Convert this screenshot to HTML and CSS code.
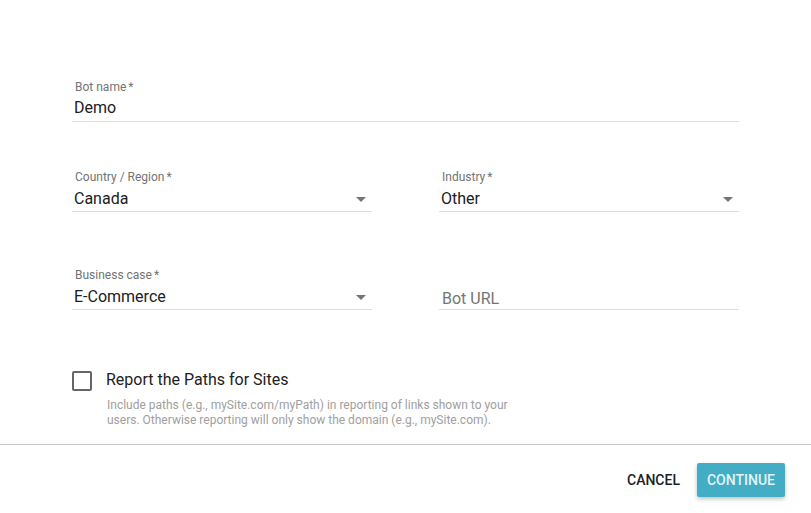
FILE: index.html
```html
<!DOCTYPE html>
<html>
<head>
<meta charset="utf-8">
<link rel="stylesheet" href="styles.css">
</head>
<body>
<div class="dialog">
  <div class="content">
    <div class="row row-1">
      <div class="field full">
        <div class="label">Bot name<span class="req">*</span></div>
        <div class="value input">Demo</div>
      </div>
    </div>
    <div class="row row-2">
      <div class="field">
        <div class="label">Country / Region<span class="req">*</span></div>
        <div class="value select"><span>Canada</span><span class="caret"></span></div>
      </div>
      <div class="field">
        <div class="label">Industry<span class="req">*</span></div>
        <div class="value select"><span>Other</span><span class="caret"></span></div>
      </div>
    </div>
    <div class="row row-3">
      <div class="field">
        <div class="label">Business case<span class="req">*</span></div>
        <div class="value select"><span>E-Commerce</span><span class="caret"></span></div>
      </div>
      <div class="field">
        <div class="label"></div>
        <div class="value placeholder"><span>Bot URL</span></div>
      </div>
    </div>
    <div class="check-row">
      <span class="checkbox"></span>
      <div class="check-text">
        <div class="check-title">Report the Paths for Sites</div>
        <div class="check-help">Include paths (e.g., mySite.com/myPath) in reporting of links shown to your<br>users. Otherwise reporting will only show the domain (e.g., mySite.com).</div>
      </div>
    </div>
  </div>
  <div class="footer">
    <button class="btn btn-flat">CANCEL</button>
    <button class="btn btn-primary">CONTINUE</button>
  </div>
</div>
</body>
</html>
```

FILE: styles.css
```css
html, body {
  margin: 0;
  padding: 0;
  background: #ffffff;
}
body {
  font-family: Roboto, "Liberation Sans", Arial, sans-serif;
  color: #212121;
  width: 811px;
  height: 513px;
  overflow: hidden;
}
.dialog {
  display: flex;
  flex-direction: column;
}
.content {
  padding: 79px 72px 16px 72px;
  display: flex;
  flex-direction: column;
}
.row {
  display: flex;
  gap: 67px;
  align-items: flex-end;
}
.row-2 { margin-top: 47px; }
.row-3 { margin-top: 54px; }
.field {
  width: 300px;
  display: flex;
  flex-direction: column;
  border-bottom: 1px solid #dedede;
}
.field.full { width: 667px; }
.label {
  font-size: 12px;
  line-height: 16px;
  height: 16px;
  color: #737373;
  padding-left: 3px;
}
.req {
  margin-left: 2px;
}
.value {
  font-size: 16px;
  line-height: 24px;
  color: #212121;
}
.value.input {
  padding: 1px 0 1px 2px;
}
.value.select {
  margin-top: 2px;
  display: flex;
  justify-content: space-between;
  align-items: center;
  padding-right: 6px;
  padding-left: 2px;
}
.value.placeholder {
  color: #757575;
  padding-left: 3px;
  padding-top: 5px;
  margin-bottom: -2px;
}
.caret {
  width: 0;
  height: 0;
  border-left: 5px solid transparent;
  border-right: 5px solid transparent;
  border-top: 5px solid #757575;
  margin-top: 1px;
}
.check-row {
  margin-top: 58px;
  display: flex;
  align-items: flex-start;
  gap: 14px;
}
.checkbox {
  width: 20px;
  height: 20px;
  box-sizing: border-box;
  border: 2px solid #666666;
  border-radius: 2px;
  margin-top: 3px;
  flex: none;
}
.check-title {
  font-size: 16px;
  line-height: 24px;
  color: #212121;
}
.check-help {
  margin-top: 6px;
  padding-left: 1px;
  font-size: 12px;
  line-height: 15px;
  color: #a0a0a0;
}
.footer {
  border-top: 1px solid #c8c8c8;
  display: flex;
  justify-content: flex-end;
  align-items: center;
  gap: 7px;
  padding: 18px 26px 0 0;
}
.btn {
  font-family: Roboto, "Liberation Sans", Arial, sans-serif;
  font-size: 14px;
  font-weight: 500;
  height: 34px;
  padding: 0 10px;
  border: none;
  border-radius: 2px;
  background: transparent;
  cursor: pointer;
}
.btn-flat {
  color: #212121;
}
.btn-primary {
  background: #42adc5;
  color: #e3f4f8;
  box-shadow: 0 2px 4px rgba(0, 0, 0, 0.25);
}
```
